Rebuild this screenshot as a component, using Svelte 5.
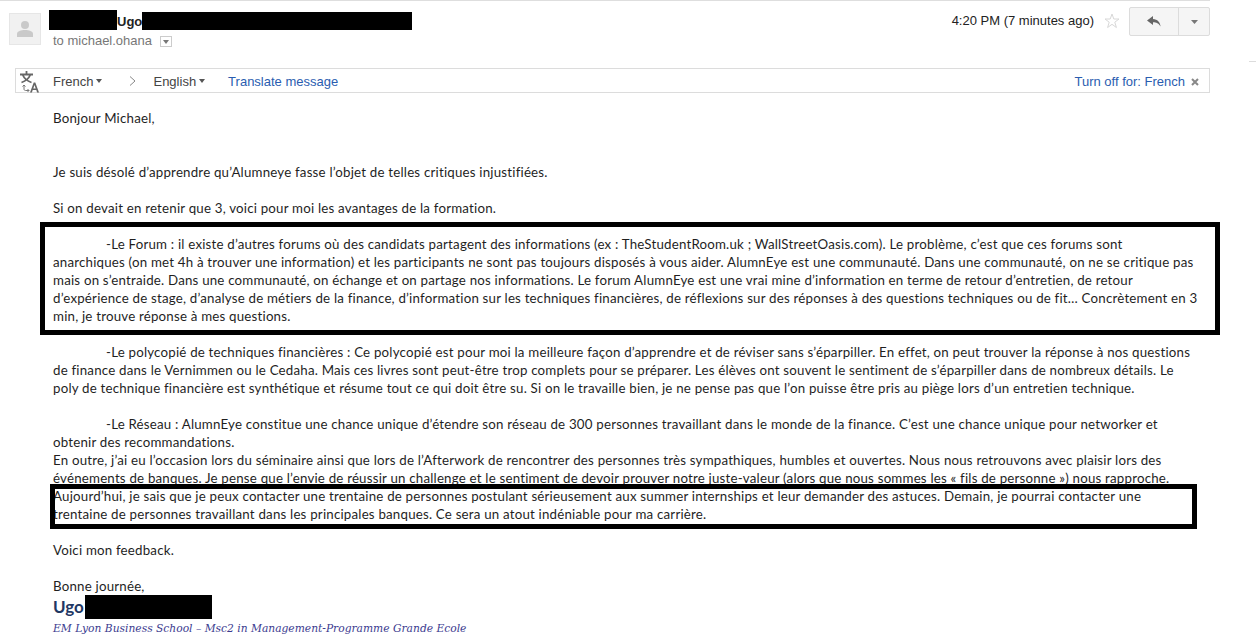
<script lang="ts">
    const forum = [
        "-Le Forum : il existe d’autres forums où des candidats partagent des informations (ex : TheStudentRoom.uk ; WallStreetOasis.com). Le problème, c’est que ces forums sont",
        "anarchiques (on met 4h à trouver une information) et les participants ne sont pas toujours disposés à vous aider. AlumnEye est une communauté. Dans une communauté, on ne se critique pas",
        "mais on s’entraide. Dans une communauté, on échange et on partage nos informations. Le forum AlumnEye est une vrai mine d’information en terme de retour d’entretien, de retour",
        "d’expérience de stage, d’analyse de métiers de la finance, d’information sur les techniques financières, de réflexions sur des réponses à des questions techniques ou de fit… Concrètement en 3",
        "min, je trouve réponse à mes questions."
    ];
    const poly = [
        "-Le polycopié de techniques financières : Ce polycopié est pour moi la meilleure façon d’apprendre et de réviser sans s’éparpiller. En effet, on peut trouver la réponse à nos questions",
        "de finance dans le Vernimmen ou le Cedaha. Mais ces livres sont peut-être trop complets pour se préparer. Les élèves ont souvent le sentiment de s’éparpiller dans de nombreux détails. Le",
        "poly de technique financière est synthétique et résume tout ce qui doit être su. Si on le travaille bien, je ne pense pas que l’on puisse être pris au piège lors d’un entretien technique."
    ];
    const reseau = [
        "-Le Réseau : AlumnEye constitue une chance unique d’étendre son réseau de 300 personnes travaillant dans le monde de la finance. C’est une chance unique pour networker et",
        "obtenir des recommandations.",
        "En outre, j’ai eu l’occasion lors du séminaire ainsi que lors de l’Afterwork de rencontrer des personnes très sympathiques, humbles et ouvertes. Nous nous retrouvons avec plaisir lors des",
        "événements de banques. Je pense que l’envie de réussir un challenge et le sentiment de devoir prouver notre juste-valeur (alors que nous sommes les « fils de personne ») nous rapproche."
    ];
    const demain = [
        "Aujourd’hui, je sais que je peux contacter une trentaine de personnes postulant sérieusement aux summer internships et leur demander des astuces. Demain, je pourrai contacter une",
        "trentaine de personnes travaillant dans les principales banques. Ce sera un atout indéniable pour ma carrière."
    ];
</script>

<div class="mail">
    <header class="head">
        <div class="avatar">
            <svg width="16" height="18" viewBox="0 0 16 18"><circle cx="8" cy="5" r="4" fill="#c9c9c9"/><path d="M0 17v-3c0-3 4-4 8-4s8 1 8 4v3z" fill="#c9c9c9"/></svg>
        </div>
        <div class="who">
            <div class="sender">
                <span class="redact first"></span><b>Ugo</b><span class="redact second"></span>
            </div>
            <div class="to">
                to michael.ohana
                <span class="more"><svg width="6" height="4" viewBox="0 0 6 4"><path d="M0 0h6L3 4z" fill="#777"/></svg></span>
            </div>
        </div>
        <div class="when">4:20 PM (7 minutes ago)</div>
        <svg class="star" width="16" height="16" viewBox="0 0 16 16"><path d="M8 1l1.800 5h5.200l-4.200 3.200 1.600 5.300L8 11.300l-4.400 3.200 1.600-5.300L1 6h5.200z" fill="none" stroke="#d8d8d8"/></svg>
        <div class="reply">
            <div class="reply-main">
                <svg width="14" height="11" viewBox="0 0 14 11"><path d="M6 0L0 4.600 6 9V6.200c3.400 0 5.800.9 7.600 4.400C13 6 10.500 3.300 6 3z" fill="#666"/></svg>
            </div>
            <div class="reply-more">
                <svg width="7" height="4" viewBox="0 0 7 4"><path d="M0 0h7L3.500 4z" fill="#777"/></svg>
            </div>
        </div>
    </header>

    <div class="translate">
        <svg class="tr-icon" width="20" height="22" viewBox="0 0 20 22">
            <path d="M0 3.500h13M6.500 0v3.500M2.500 3.500c1.500 3.500 4.500 6.500 9 8M10.500 3.500c-1.500 3.500-4.500 6.500-9 8" fill="none" stroke="#666" stroke-width="1.800"/>
            <path d="M4 14v4c0 1 .7 1.500 1.500 1.500H9M7.500 18L9 19.500 7.500 21M2.500 15.500L4 14l1.500 1.500" fill="none" stroke="#777"/>
            <path d="M10 21.500l3.700-10h1.600l3.700 10h-1.900l-.8-2.400h-3.600l-.8 2.400zM13.300 17.500h2.400L14.500 14z" fill="#666"/>
        </svg>
        <span class="lang one">French<i class="caret"></i></span>
        <svg class="chev" width="7" height="10" viewBox="0 0 7 10"><path d="M1 .5L6 5 1 9.500" fill="none" stroke="#888"/></svg>
        <span class="lang two">English<i class="caret"></i></span>
        <span class="link">Translate message</span>
        <span class="link off">Turn off for: French</span>
        <svg class="close" width="8" height="8" viewBox="0 0 8 8"><path d="M1 1l6 6M7 1L1 7" stroke="#888" stroke-width="2"/></svg>
    </div>
    <span class="edge-tick"></span>

    <div class="body">
        <p class="first-p">Bonjour Michael,</p>
        <p class="gap2">Je suis désolé d’apprendre qu’Alumneye fasse l’objet de telles critiques injustifiées.</p>
        <p class="gap">Si on devait en retenir que 3, voici pour moi les avantages de la formation.</p>

        <div class="gap boxed">
            {#each forum as line, i}
                <div class:indent={i === 0}>{line}</div>
            {/each}
            <span class="frame frame-forum"></span>
        </div>

        <div class="gap">
            {#each poly as line, i}
                <div class:indent={i === 0}>{line}</div>
            {/each}
        </div>

        <div class="gap">
            {#each reseau as line, i}
                <div class:indent={i === 0}>{line}</div>
            {/each}
            <div class="boxed">
                {#each demain as line}
                    <div>{line}</div>
                {/each}
                <span class="frame frame-demain"></span>
            </div>
        </div>

        <p class="gap">Voici mon feedback.</p>
        <p class="gap">Bonne journée,</p>
        <div class="sign"><b>Ugo</b><span class="redact third"></span></div>
        <div class="school">EM Lyon Business School – Msc2 in Management-Programme Grande Ecole</div>
    </div>
</div>

<style>
    :global(body) {
        background: #fff;
        overflow: hidden;
    }
    .mail {
        position: relative;
        width: 1256px;
        height: 636px;
        overflow: hidden;
        font-family: "Liberation Sans", Arial, sans-serif;
        font-size: 13px;
        color: #222;
    }
    .head {
        width: 1210px;
        height: 68px;
        box-sizing: border-box;
        border-top: 1px solid #dedede;
        display: flex;
        align-items: flex-start;
    }
    .avatar {
        width: 32px;
        height: 32px;
        margin: 12px 0 0 9px;
        background: #f1f1f1;
        border: 1px solid #e6e6e6;
        box-sizing: border-box;
        display: flex;
        align-items: center;
        justify-content: center;
    }
    .who {
        margin-left: 8px;
        flex: 1;
    }
    .sender {
        display: flex;
        align-items: center;
        height: 22px;
        margin-top: 9px;
        font-size: 13px;
        color: #222;
    }
    .redact {
        display: block;
        background: #000;
    }
    .first {
        width: 68px;
        height: 20px;
        margin-top: -3px;
    }
    .second {
        width: 270px;
        height: 18px;
    }
    .to {
        margin-left: 4px;
        color: #777;
        font-size: 13px;
        line-height: 18px;
        display: flex;
        align-items: center;
        gap: 8px;
    }
    .more {
        box-sizing: border-box;
        width: 12px;
        height: 11px;
        border: 1px solid #ccc;
        display: flex;
        align-items: center;
        justify-content: center;
        margin-top: 1px;
    }
    .when {
        margin-top: 12px;
        font-size: 13px;
        line-height: 16px;
        color: #222;
    }
    .star {
        margin: 12px 9px 0 10px;
    }
    .reply {
        margin-top: 6px;
        width: 81px;
        height: 29px;
        box-sizing: border-box;
        border: 1px solid #dcdcdc;
        border-radius: 2px;
        background: #f5f5f5;
        display: flex;
    }
    .reply-main {
        width: 48px;
        border-right: 1px solid #dcdcdc;
        display: flex;
        align-items: center;
        justify-content: center;
    }
    .reply-more {
        flex: 1;
        display: flex;
        align-items: center;
        justify-content: center;
    }
    .translate {
        margin-left: 15px;
        width: 1195px;
        height: 25px;
        box-sizing: border-box;
        border: 1px solid #dcdcdc;
        display: flex;
        align-items: center;
        font-size: 13px;
        line-height: 17px;
        padding-top: 1px;
        color: #444;
    }
    .edge-tick {
        position: absolute;
        right: 0;
        top: 61px;
        width: 7px;
        height: 1px;
        background: #dcdcdc;
    }
    .tr-icon {
        margin: 1px 0 0 4px;
    }
    .lang {
        display: flex;
        align-items: center;
    }
    .one {
        margin-left: 13px;
    }
    .two {
        margin-left: 17px;
    }
    .chev {
        margin-left: 27px;
    }
    .caret {
        margin-left: 3px;
        border-left: 3.500px solid transparent;
        border-right: 3.500px solid transparent;
        border-top: 4px solid #555;
    }
    .link {
        color: #2a5db0;
        margin-left: 23px;
    }
    .off {
        margin-left: auto;
    }
    .close {
        margin: 1px 10px 0 6px;
    }
    .body {
        margin: 16px 0 0 53px;
        font-family: Lato, "Open Sans", sans-serif;
        font-size: 13.300px;
        letter-spacing: 0.2px;
        line-height: 18px;
        color: #1f1f1f;
        white-space: nowrap;
    }
    p {
        margin: 0;
    }
    .gap {
        margin-top: 18px;
    }
    .gap2 {
        margin-top: 36px;
    }
    .indent {
        padding-left: 53px;
    }
    .boxed {
        position: relative;
        width: 1150px;
    }
    .frame {
        position: absolute;
        box-sizing: border-box;
        border: 5px solid #000;
        pointer-events: none;
    }
    .frame-forum {
        left: -13px;
        top: -13px;
        width: 1180px;
        height: 113px;
    }
    .frame-demain {
        left: -3px;
        top: -3px;
        width: 1147px;
        height: 45px;
    }
    .sign {
        display: flex;
        align-items: center;
        height: 24px;
        font-size: 17px;
        letter-spacing: 0;
        color: #1f3864;
    }
    .third {
        width: 127px;
        height: 24px;
        margin-left: 1px;
    }
    .school {
        font-family: "DejaVu Serif", "Liberation Serif", serif;
        font-style: italic;
        font-size: 10.700px;
        letter-spacing: 0;
        line-height: 18px;
        padding-top: 1px;
        color: #3b3b8f;
    }
</style>
